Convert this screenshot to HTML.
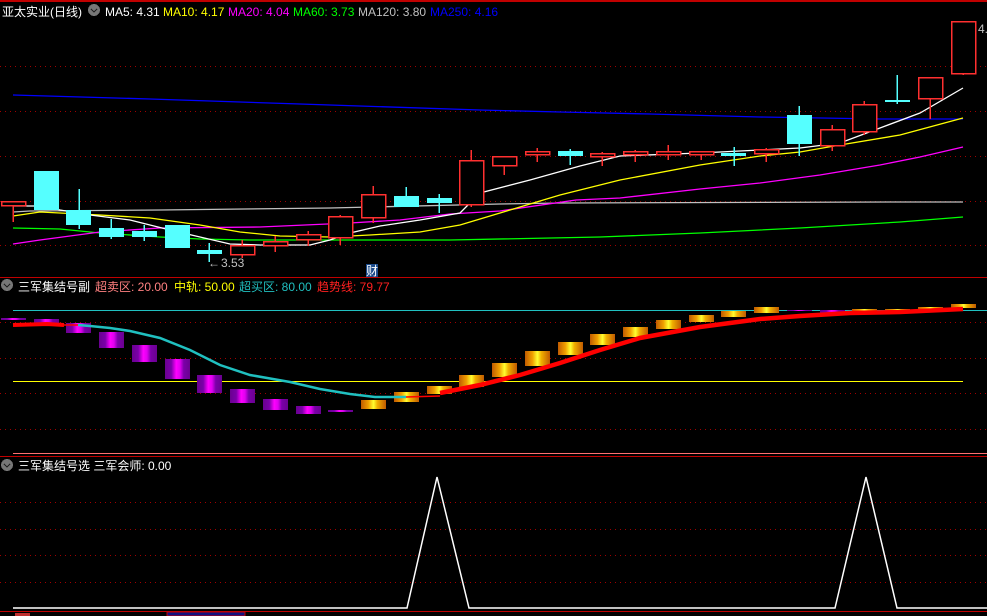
<!DOCTYPE html>
<html><head><meta charset="utf-8"><style>
html,body{margin:0;padding:0;background:#000;width:987px;height:616px;overflow:hidden}
svg{display:block}
text{font-family:"Liberation Sans","Noto Sans CJK SC",sans-serif;font-size:12px}
</style></head><body>
<svg width="987" height="616" viewBox="0 0 987 616" xmlns="http://www.w3.org/2000/svg" shape-rendering="crispEdges">
<defs>
<linearGradient id="pu" x1="0" x2="1" y1="0" y2="0"><stop offset="0" stop-color="#6a0090"/><stop offset="0.25" stop-color="#7a00a8"/><stop offset="0.45" stop-color="#ff00ff"/><stop offset="0.6" stop-color="#e000f0"/><stop offset="0.75" stop-color="#7a00a8"/><stop offset="1" stop-color="#6a0090"/></linearGradient>
<linearGradient id="go" x1="0" x2="1" y1="0" y2="0"><stop offset="0" stop-color="#c05a00"/><stop offset="0.3" stop-color="#f0a000"/><stop offset="0.5" stop-color="#ffff30"/><stop offset="0.65" stop-color="#f0b000"/><stop offset="1" stop-color="#c05a00"/></linearGradient>
</defs>
<rect x="0" y="0" width="987" height="2" fill="#c00000"/>
<rect x="0" y="277" width="987" height="1" fill="#c00000"/>
<rect x="13" y="453" width="974" height="1" fill="#ff7070"/>
<rect x="0" y="456" width="987" height="1" fill="#c00000"/>
<rect x="0" y="611" width="987" height="1" fill="#c00000"/>
<g stroke="#a00000" stroke-dasharray="1,4" stroke-width="1">
<line x1="0" y1="66.5" x2="987" y2="66.5"/><line x1="0" y1="111.5" x2="987" y2="111.5"/><line x1="0" y1="156.5" x2="987" y2="156.5"/><line x1="0" y1="201.5" x2="987" y2="201.5"/><line x1="0" y1="245.5" x2="987" y2="245.5"/>
<line x1="0" y1="322.5" x2="987" y2="322.5"/><line x1="0" y1="358.5" x2="987" y2="358.5"/><line x1="0" y1="393.5" x2="987" y2="393.5"/><line x1="0" y1="429.5" x2="987" y2="429.5"/>
<line x1="0" y1="502.5" x2="987" y2="502.5"/><line x1="0" y1="529.5" x2="987" y2="529.5"/><line x1="0" y1="555.5" x2="987" y2="555.5"/><line x1="0" y1="582.5" x2="987" y2="582.5"/>
</g>
<g fill="none" stroke-width="1.3" shape-rendering="auto">
<polyline stroke="#0000ff" points="13,95 150,99 300,104 480,110 560,112 650,114 760,117 880,119 963,119"/>
<polyline stroke="#c0c0c0" points="13,212 30,211 160,210 330,208 500,204 560,203 900,202 963,202"/>
<polyline stroke="#00ff00" points="13,228 60,229 100,233 160,237 200,239 250,240 450,240 600,237 700,233 800,228 900,222 963,217"/>
<polyline stroke="#ff00ff" points="13,244 40,240 70,236 100,232 160,228 260,227 350,223 400,220 450,214 500,211 576,200 620,198 700,189 760,183 820,175 880,165 920,157 963,147"/>
<polyline stroke="#ffff00" points="13,216 40,212 100,215 150,218 200,225 240,232 280,236 330,237 370,235 420,232 460,225 510,210 560,195 620,180 700,165 760,156 800,152 840,145 900,135 963,118"/>
<polyline stroke="#ffffff" points="13,206 45,206 60,210 90,215 130,220 170,230 200,237 230,244 260,245 310,245 330,240 350,233 380,226 420,220 460,213 480,193 530,180 580,166 620,156 700,153 760,150 800,148 840,143 880,128 920,113 963,88"/>
</g>
<g stroke="#ff3030" stroke-width="1.5" fill="#000">
<line x1="13" y1="205" x2="13" y2="222"/><rect x="1.5" y="201.5" width="24" height="4"/>
<line x1="242" y1="240" x2="242" y2="258"/><rect x="230.5" y="245.5" width="24" height="9"/>
<line x1="275" y1="236" x2="275" y2="252"/><rect x="263.5" y="241.5" width="24" height="4"/>
<line x1="308" y1="231" x2="308" y2="246"/><rect x="296.5" y="234.5" width="24" height="5"/>
<line x1="340" y1="215" x2="340" y2="245"/><rect x="328.5" y="216.5" width="24" height="21"/>
<line x1="373" y1="186" x2="373" y2="223"/><rect x="361.5" y="194.5" width="24" height="23"/>
<line x1="471" y1="150" x2="471" y2="207"/><rect x="459.5" y="160.5" width="24" height="44"/>
<line x1="504" y1="165" x2="504" y2="175"/><rect x="492.5" y="156.5" width="24" height="9"/>
<line x1="537" y1="148" x2="537" y2="162"/><rect x="525.5" y="151.5" width="24" height="3"/>
<line x1="602" y1="152" x2="602" y2="166"/><rect x="590.5" y="153.5" width="24" height="3"/>
<line x1="635" y1="150" x2="635" y2="162"/><rect x="623.5" y="151.5" width="24" height="3"/>
<line x1="668" y1="145" x2="668" y2="160"/><rect x="656.5" y="151.5" width="24" height="3"/>
<line x1="701" y1="151" x2="701" y2="160"/><rect x="689.5" y="151.5" width="24" height="3"/>
<line x1="766" y1="148" x2="766" y2="162"/><rect x="754.5" y="149.5" width="24" height="4"/>
<line x1="832" y1="125" x2="832" y2="151"/><rect x="820.5" y="129.5" width="24" height="16"/>
<line x1="864" y1="101" x2="864" y2="135"/><rect x="852.5" y="104.5" width="24" height="27"/>
<line x1="930" y1="98" x2="930" y2="119"/><rect x="918.5" y="77.5" width="24" height="21"/>
<line x1="963" y1="73" x2="963" y2="75"/><rect x="951.5" y="21.5" width="24" height="52"/>
</g>
<g fill="#55ffff" stroke="#55ffff" stroke-width="1.5">
<rect x="34" y="171" width="25" height="39" stroke="none"/>
<line x1="79" y1="189" x2="79" y2="229"/><rect x="66" y="210" width="25" height="15" stroke="none"/>
<line x1="111" y1="219" x2="111" y2="239"/><rect x="99" y="228" width="25" height="9" stroke="none"/>
<line x1="144" y1="225" x2="144" y2="241"/><rect x="132" y="231" width="25" height="6" stroke="none"/>
<rect x="165" y="225" width="25" height="23" stroke="none"/>
<line x1="209" y1="243" x2="209" y2="262"/><rect x="197" y="250" width="25" height="4" stroke="none"/>
<line x1="406" y1="187" x2="406" y2="207"/><rect x="394" y="196" width="25" height="11" stroke="none"/>
<line x1="439" y1="194" x2="439" y2="213"/><rect x="427" y="198" width="25" height="5" stroke="none"/>
<line x1="570" y1="149" x2="570" y2="165"/><rect x="558" y="151" width="25" height="5" stroke="none"/>
<line x1="734" y1="147" x2="734" y2="166"/><rect x="721" y="153" width="25" height="3" stroke="none"/>
<line x1="799" y1="106" x2="799" y2="156"/><rect x="787" y="115" width="25" height="29" stroke="none"/>
<line x1="897" y1="75" x2="897" y2="104"/><rect x="885" y="100" width="25" height="2" stroke="none"/>
</g>
<text x="221" y="267" fill="#c0c0c0">3.53</text>
<text x="208" y="267" fill="#c0c0c0" font-size="10">←</text>
<text x="978" y="33" fill="#c0c0c0">4.</text>
<rect x="366" y="264" width="12" height="13" fill="#1a4a8a"/>
<text x="366" y="275" fill="#fff" font-size="11">财</text>
<text x="2" y="16" fill="#ffffff">亚太实业(日线)</text>
<circle cx="94" cy="10" r="6" fill="#777"/><path d="M91 9l3 3 3-3" stroke="#222" stroke-width="1.3" fill="none"/>
<text x="105" y="16" fill="#fff">MA5: 4.31</text>
<text x="163" y="16" fill="#ffff00">MA10: 4.17</text>
<text x="228" y="16" fill="#ff00ff">MA20: 4.04</text>
<text x="293" y="16" fill="#00ff00">MA60: 3.73</text>
<text x="358" y="16" fill="#c0c0c0">MA120: 3.80</text>
<text x="430" y="16" fill="#0000ff">MA250: 4.16</text>
<rect x="13" y="310" width="974" height="1" fill="#20c0c0"/>
<rect x="13" y="381" width="950" height="1" fill="#ffff00"/>
<g fill="url(#pu)">
<rect x="1" y="318" width="25" height="2"/><rect x="34" y="319" width="25" height="4"/><rect x="66" y="323" width="25" height="10"/><rect x="99" y="332" width="25" height="16"/><rect x="132" y="345" width="25" height="17"/><rect x="165" y="359" width="25" height="20"/><rect x="197" y="375" width="25" height="18"/><rect x="230" y="389" width="25" height="14"/><rect x="263" y="399" width="25" height="11"/><rect x="296" y="406" width="25" height="8"/><rect x="328" y="410" width="25" height="2"/><rect x="787" y="310" width="25" height="1"/><rect x="820" y="310" width="25" height="3"/>
</g>
<g fill="url(#go)">
<rect x="361" y="400" width="25" height="9"/><rect x="394" y="392" width="25" height="10"/><rect x="427" y="386" width="25" height="8"/><rect x="459" y="375" width="25" height="12"/><rect x="492" y="363" width="25" height="14"/><rect x="525" y="351" width="25" height="15"/><rect x="558" y="342" width="25" height="13"/><rect x="590" y="334" width="25" height="11"/><rect x="623" y="327" width="25" height="10"/><rect x="656" y="320" width="25" height="9"/><rect x="689" y="315" width="25" height="7"/><rect x="721" y="311" width="25" height="6"/><rect x="754" y="307" width="25" height="6"/><rect x="852" y="309" width="25" height="2"/><rect x="885" y="309" width="25" height="1"/><rect x="918" y="307" width="25" height="3"/><rect x="951" y="304" width="25" height="4"/>
</g>
<g fill="none" shape-rendering="auto">
<polyline stroke="#ff0000" stroke-width="4" points="13,325 47,324 64,325"/>
<polyline stroke="#ff0000" stroke-width="1.5" points="64,325 78,325"/>
<polyline stroke="#20c0c0" stroke-width="2.5" points="78,325 90,326 110,328 130,331 160,338 190,350 220,365 250,375 290,382 320,389 350,394 375,397 406,397"/>
<polyline stroke="#ff0000" stroke-width="1.5" points="406,397 440,396"/>
<polyline stroke="#ff0000" stroke-width="4.5" points="440,393 480,385 520,375 560,363 600,350 640,338 700,327 760,319 800,316 850,313 900,312 963,309"/>
</g>
<text x="18" y="291" fill="#fff">三军集结号副</text>
<circle cx="7" cy="285" r="6" fill="#777"/><path d="M4 284l3 3 3-3" stroke="#222" stroke-width="1.3" fill="none"/>
<text x="95" y="291" fill="#ff8080">超卖区: 20.00</text>
<text x="174" y="291" fill="#ffff00">中轨: 50.00</text>
<text x="239" y="291" fill="#20c0c0">超买区: 80.00</text>
<text x="317" y="291" fill="#ff2020">趋势线: 79.77</text>
<circle cx="7" cy="465" r="6" fill="#777"/><path d="M4 464l3 3 3-3" stroke="#222" stroke-width="1.3" fill="none"/>
<text x="18" y="470" fill="#fff">三军集结号选 三军会师: 0.00</text>
<polyline fill="none" stroke="#fff" stroke-width="1.5" shape-rendering="auto" points="13,608 407,608 437,477 469,608 835,608 866,477 897,608 987,608"/>
<rect x="167" y="612" width="78" height="4" fill="#101080" stroke="#c00000"/>
<rect x="15" y="613" width="15" height="3" fill="#c03030"/>
</svg>
</body></html>
